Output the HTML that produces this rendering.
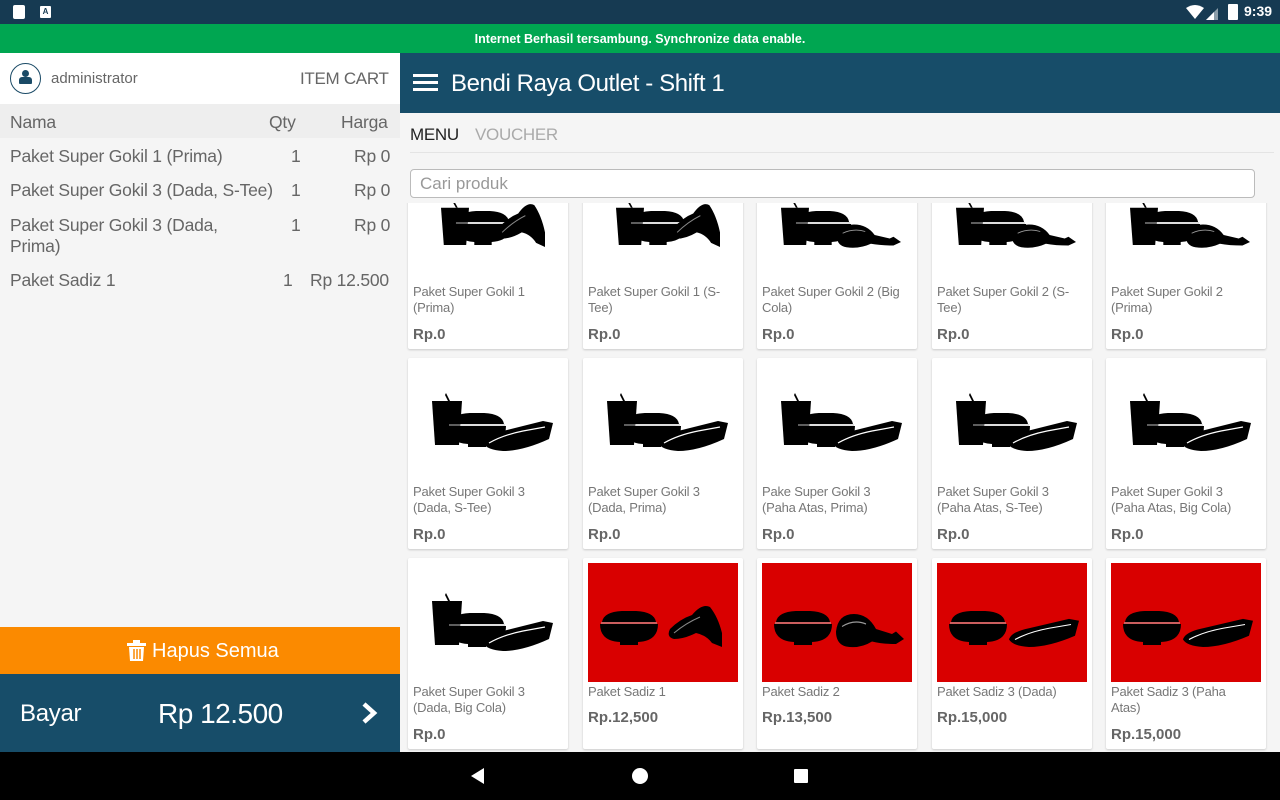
<!DOCTYPE html>
<html><head><meta charset="utf-8"><style>
*{margin:0;padding:0;box-sizing:border-box}
body{width:1280px;height:800px;overflow:hidden;font-family:"Liberation Sans",sans-serif;background:#f5f5f5;position:relative}
.abs{position:absolute}
.card{position:absolute;width:160px;height:191px;background:#fff;border-radius:2px;box-shadow:0 1px 2px rgba(0,0,0,.18);overflow:hidden}
.card .t{position:absolute;left:5px;top:126px;width:140px;font-size:13px;line-height:16px;color:#777;letter-spacing:-0.2px}
.card .p{position:absolute;left:5px;top:168px;font-size:15px;font-weight:bold;color:#666}
.card .red{position:absolute;left:5px;top:5px;width:150px;height:119px;background:#d90000}
.card.r .t{top:126px}.card.r .p{top:151px}
.c{font-size:17.5px;color:#666;letter-spacing:-0.2px}
</style></head><body>
<svg width="0" height="0" style="position:absolute">
<defs>
<symbol id="cup" viewBox="0 0 30 52" preserveAspectRatio="none"><path d="M14 0 L18 8 L16 8 L13 2Z" fill="#000"/><path d="M0 8 H30 L27 52 H3Z" fill="#000"/></symbol>
<symbol id="bowl" viewBox="0 0 58 34" preserveAspectRatio="none"><path d="M2 11 Q4 -1 29 0 Q54 -1 56 11 Z" fill="#000"/><path d="M0 13 H58 Q58 30 38 31 V34 H20 V31 Q0 30 0 13Z" fill="#000"/><path d="M1 12 H57" stroke="#bbb" stroke-width="1"/></symbol>
<symbol id="plate" viewBox="0 0 70 32" preserveAspectRatio="none"><path d="M0 24 Q2 16 20 12 L60 2 L70 4 L66 20 Q40 32 20 32 Q4 31 0 24Z" fill="#000"/><path d="M6 24 Q20 16 40 12 L62 8" stroke="#fff" stroke-width="1.2" fill="none"/></symbol>
<symbol id="wing" viewBox="0 0 56 44" preserveAspectRatio="none"><path d="M4 26 Q14 16 26 12 Q36 0 44 4 Q52 14 56 30 L56 44 L46 40 Q40 32 30 30 Q18 36 8 36 Q0 34 4 26Z" fill="#000"/><path d="M8 30 Q20 20 34 14" stroke="#888" stroke-width="1" fill="none"/></symbol>
<symbol id="leg" viewBox="0 0 68 32" preserveAspectRatio="none"><path d="M0 18 Q2 4 18 4 Q32 4 40 16 L56 20 L60 18 L68 24 L60 28 Q46 28 36 26 Q24 32 10 30 Q0 28 0 18Z" fill="#000"/><path d="M6 14 Q18 8 30 12" stroke="#999" stroke-width="1" fill="none"/></symbol>
</defs></svg>

<div class="abs" style="left:0;top:0;width:1280px;height:24px;background:#163a52"></div>
<div class="abs" style="left:13px;top:5px;width:12px;height:14px;background:#fff;border-radius:2px"></div>
<div class="abs" style="left:40px;top:6px;width:11px;height:12px;background:#fff;border-radius:1px;font-size:8px;font-weight:bold;text-align:center;line-height:11px;color:#163a52">A</div>
<svg class="abs" style="left:1186px;top:5px" width="40" height="16"><path d="M0 3 Q9 -3 18 3 L9 14Z" fill="#fff"/><path d="M20 15 L32 3 V15Z" fill="#fff" opacity=".5"/><path d="M20 15 L28 7 V15Z" fill="#fff"/></svg>
<div class="abs" style="left:1228px;top:4px;width:10px;height:16px;background:#fff;border-radius:1px"></div>
<div class="abs" style="left:1244px;top:3px;color:#fff;font-size:14px;font-weight:bold">9:39</div>
<div class="abs" style="left:0;top:24px;width:1280px;height:29px;background:#00a651;color:#fff;font-size:12.5px;font-weight:bold;text-align:center;line-height:30px">Internet Berhasil tersambung. Synchronize data enable.</div>

<div class="abs" style="left:0;top:53px;width:400px;height:51px;background:#fff"></div>
<div class="abs" style="left:10px;top:63px;width:31px;height:31px;border:1.5px solid #1a4a66;border-radius:50%"></div>
<div class="abs" style="left:22px;top:70px;width:7px;height:7px;background:#1a4a66;border-radius:50%"></div>
<div class="abs" style="left:19px;top:77px;width:13px;height:7px;background:#1a4a66;border-radius:3px 3px 1px 1px"></div>
<div class="abs" style="left:51px;top:70px;font-size:15px;color:#666">administrator</div>
<div class="abs" style="left:300px;top:69px;font-size:17px;color:#666;letter-spacing:-0.3px">ITEM CART</div>
<div class="abs" style="left:0;top:104px;width:400px;height:34px;background:#eee"></div>
<div class="abs c" style="left:10px;top:112px">Nama</div>
<div class="abs c" style="left:269px;top:112px">Qty</div>
<div class="abs c" style="left:341px;top:112px">Harga</div>
<div class="abs c" style="left:10px;top:146px">Paket Super Gokil 1 (Prima)</div>
<div class="abs c" style="left:291px;top:146px">1</div>
<div class="abs c" style="left:354px;top:146px">Rp 0</div>
<div class="abs c" style="left:10px;top:180px">Paket Super Gokil 3 (Dada, S-Tee)</div>
<div class="abs c" style="left:291px;top:180px">1</div>
<div class="abs c" style="left:354px;top:180px">Rp 0</div>
<div class="abs c" style="left:10px;top:215px;line-height:21px">Paket Super Gokil 3 (Dada,<br>Prima)</div>
<div class="abs c" style="left:291px;top:215px">1</div>
<div class="abs c" style="left:354px;top:215px">Rp 0</div>
<div class="abs c" style="left:10px;top:270px">Paket Sadiz 1</div>
<div class="abs c" style="left:283px;top:270px">1</div>
<div class="abs c" style="left:310px;top:270px">Rp 12.500</div>
<div class="abs" style="left:0;top:627px;width:400px;height:47px;background:#fb8a00"></div>
<svg class="abs" style="left:127px;top:640px" width="20" height="22"><rect x="0" y="3" width="19" height="3" fill="#fff"/><rect x="6" y="0" width="7" height="3" fill="#fff"/><path d="M2 7 H17 L16 21 H3Z" fill="#fff"/><path d="M7 9 V19 M10 9 V19 M13 9 V19" stroke="#fb8a00" stroke-width="1.5"/></svg>
<div class="abs" style="left:152px;top:640px;font-size:20px;color:#fff">Hapus Semua</div>
<div class="abs" style="left:0;top:674px;width:400px;height:78px;background:#174d69"></div>
<div class="abs" style="left:20px;top:700px;font-size:24px;color:#fff;letter-spacing:-0.3px">Bayar</div>
<div class="abs" style="left:158px;top:698px;font-size:28px;color:#fff;letter-spacing:-0.5px">Rp 12.500</div>
<svg class="abs" style="left:360px;top:701px" width="20" height="24"><path d="M4 3 L14 12 L4 21" stroke="#fff" stroke-width="4.5" fill="none"/></svg>

<div class="abs" style="left:400px;top:53px;width:880px;height:60px;background:#174d69"></div>
<div class="abs" style="left:413px;top:74px;width:25px;height:3px;background:#fff"></div>
<div class="abs" style="left:413px;top:81px;width:25px;height:3px;background:#fff"></div>
<div class="abs" style="left:413px;top:88px;width:25px;height:3px;background:#fff"></div>
<div class="abs" style="left:451px;top:70px;font-size:24px;color:#fff;letter-spacing:-0.4px">Bendi Raya Outlet - Shift 1</div>
<div class="abs" style="left:410px;top:125px;font-size:17px;color:#222;letter-spacing:-0.3px">MENU</div>
<div class="abs" style="left:475px;top:125px;font-size:17px;color:#aaa;letter-spacing:-0.3px">VOUCHER</div>
<div class="abs" style="left:410px;top:152px;width:864px;height:1px;background:#e4e4e4"></div>

<div class="abs" style="left:400px;top:203px;width:880px;height:549px;overflow:hidden">
<div style="position:absolute;left:0;top:-45px;width:880px;height:600px">
<div class="card" style="left:8px;top:0"><svg class="abs" style="left:33px;top:43px" width="106" height="50"><use href="#cup" x="0" y="0" width="28" height="44"/><use href="#bowl" x="14" y="10" width="56" height="34"/><use href="#wing" x="54" y="0" width="50" height="46"/></svg><div class="t">Paket Super Gokil 1 (Prima)</div><div class="p">Rp.0</div></div>
<div class="card" style="left:183px;top:0"><svg class="abs" style="left:33px;top:43px" width="106" height="50"><use href="#cup" x="0" y="0" width="28" height="44"/><use href="#bowl" x="14" y="10" width="56" height="34"/><use href="#wing" x="54" y="0" width="50" height="46"/></svg><div class="t">Paket Super Gokil 1 (S-Tee)</div><div class="p">Rp.0</div></div>
<div class="card" style="left:357px;top:0"><svg class="abs" style="left:24px;top:43px" width="124" height="50"><use href="#cup" x="0" y="0" width="28" height="44"/><use href="#bowl" x="14" y="10" width="56" height="34"/><use href="#leg" x="56" y="20" width="64" height="28"/></svg><div class="t" style="width:150px">Paket Super Gokil 2 (Big Cola)</div><div class="p">Rp.0</div></div>
<div class="card" style="left:532px;top:0"><svg class="abs" style="left:24px;top:43px" width="124" height="50"><use href="#cup" x="0" y="0" width="28" height="44"/><use href="#bowl" x="14" y="10" width="56" height="34"/><use href="#leg" x="56" y="20" width="64" height="28"/></svg><div class="t">Paket Super Gokil 2 (S-Tee)</div><div class="p">Rp.0</div></div>
<div class="card" style="left:706px;top:0"><svg class="abs" style="left:24px;top:43px" width="124" height="50"><use href="#cup" x="0" y="0" width="28" height="44"/><use href="#bowl" x="14" y="10" width="56" height="34"/><use href="#leg" x="56" y="20" width="64" height="28"/></svg><div class="t">Paket Super Gokil 2 (Prima)</div><div class="p">Rp.0</div></div>
<div class="card" style="left:8px;top:200px"><svg class="abs" style="left:24px;top:35px" width="122" height="62"><use href="#cup" x="0" y="0" width="30" height="52"/><use href="#bowl" x="16" y="20" width="58" height="34"/><use href="#plate" x="51" y="26" width="70" height="32"/></svg><div class="t">Paket Super Gokil 3 (Dada, S-Tee)</div><div class="p">Rp.0</div></div>
<div class="card" style="left:183px;top:200px"><svg class="abs" style="left:24px;top:35px" width="122" height="62"><use href="#cup" x="0" y="0" width="30" height="52"/><use href="#bowl" x="16" y="20" width="58" height="34"/><use href="#plate" x="51" y="26" width="70" height="32"/></svg><div class="t">Paket Super Gokil 3 (Dada, Prima)</div><div class="p">Rp.0</div></div>
<div class="card" style="left:357px;top:200px"><svg class="abs" style="left:24px;top:35px" width="122" height="62"><use href="#cup" x="0" y="0" width="30" height="52"/><use href="#bowl" x="16" y="20" width="58" height="34"/><use href="#plate" x="51" y="26" width="70" height="32"/></svg><div class="t">Pake Super Gokil 3 (Paha Atas, Prima)</div><div class="p">Rp.0</div></div>
<div class="card" style="left:532px;top:200px"><svg class="abs" style="left:24px;top:35px" width="122" height="62"><use href="#cup" x="0" y="0" width="30" height="52"/><use href="#bowl" x="16" y="20" width="58" height="34"/><use href="#plate" x="51" y="26" width="70" height="32"/></svg><div class="t">Paket Super Gokil 3 (Paha Atas, S-Tee)</div><div class="p">Rp.0</div></div>
<div class="card" style="left:706px;top:200px"><svg class="abs" style="left:24px;top:35px" width="122" height="62"><use href="#cup" x="0" y="0" width="30" height="52"/><use href="#bowl" x="16" y="20" width="58" height="34"/><use href="#plate" x="51" y="26" width="70" height="32"/></svg><div class="t">Paket Super Gokil 3 (Paha Atas, Big Cola)</div><div class="p">Rp.0</div></div>
<div class="card" style="left:8px;top:400px"><svg class="abs" style="left:24px;top:35px" width="122" height="62"><use href="#cup" x="0" y="0" width="30" height="52"/><use href="#bowl" x="16" y="20" width="58" height="34"/><use href="#plate" x="51" y="26" width="70" height="32"/></svg><div class="t">Paket Super Gokil 3 (Dada, Big Cola)</div><div class="p">Rp.0</div></div>
<div class="card r" style="left:183px;top:400px"><div class="red"><svg class="abs" style="left:12px;top:40px" width="130" height="50"><use href="#bowl" x="0" y="8" width="58" height="34"/><use href="#wing" x="66" y="0" width="56" height="44"/></svg></div><div class="t">Paket Sadiz 1</div><div class="p">Rp.12,500</div></div>
<div class="card r" style="left:357px;top:400px"><div class="red"><svg class="abs" style="left:12px;top:40px" width="136" height="50"><use href="#bowl" x="0" y="8" width="58" height="34"/><use href="#leg" x="62" y="6" width="68" height="40"/></svg></div><div class="t">Paket Sadiz 2</div><div class="p">Rp.13,500</div></div>
<div class="card r" style="left:532px;top:400px"><div class="red"><svg class="abs" style="left:12px;top:40px" width="136" height="50"><use href="#bowl" x="0" y="8" width="58" height="34"/><use href="#plate" x="60" y="14" width="70" height="30"/></svg></div><div class="t">Paket Sadiz 3 (Dada)</div><div class="p">Rp.15,000</div></div>
<div class="card r" style="left:706px;top:400px"><div class="red"><svg class="abs" style="left:12px;top:40px" width="136" height="50"><use href="#bowl" x="0" y="8" width="58" height="34"/><use href="#plate" x="60" y="14" width="70" height="30"/></svg></div><div class="t" style="width:125px">Paket Sadiz 3 (Paha Atas)</div><div class="p" style="top:168px">Rp.15,000</div></div>
</div></div>

<div class="abs" style="left:410px;top:169px;width:845px;height:29px;background:#fff;border:1px solid #bbb;border-radius:4px;font-size:17px;color:#999;padding:4px 0 0 9px">Cari produk</div>

<div class="abs" style="left:0;top:752px;width:1280px;height:48px;background:#000"></div>
<svg class="abs" style="left:470px;top:767px" width="16" height="18"><path d="M14 1 V17 L1 9Z" fill="#fff"/></svg>
<div class="abs" style="left:632px;top:768px;width:16px;height:16px;border-radius:50%;background:#fff"></div>
<div class="abs" style="left:794px;top:769px;width:14px;height:14px;border-radius:1px;background:#fff"></div>
</body></html>
